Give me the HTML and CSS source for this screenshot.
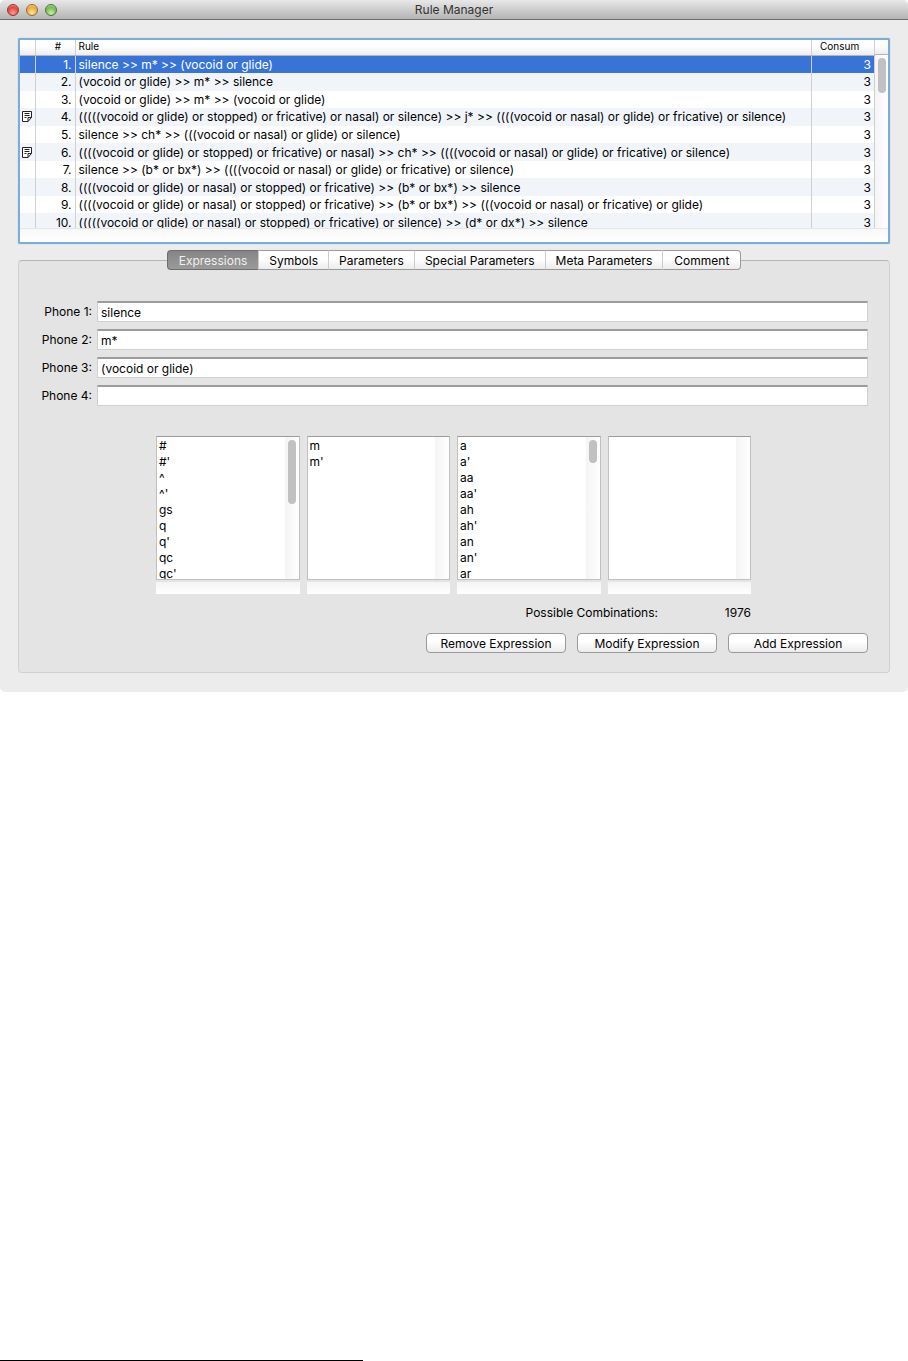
FILE: index.html
```html
<!DOCTYPE html>
<html lang="en">
<head>
    <meta charset="UTF-8">
    <meta name="viewport" content="width=device-width, initial-scale=1.0">
    <title>Rule Manager</title>
    <link rel="stylesheet" href="styles.css">
</head>
<body>
    <main class="window">
        <header class="titlebar">
            <div class="lights">
                <button class="light light-red" aria-label="Close"></button>
                <button class="light light-yellow" aria-label="Minimize"></button>
                <button class="light light-green" aria-label="Zoom"></button>
            </div>
            <h1>Rule Manager</h1>
        </header>

        <div class="content">
            <!-- Rule list -->
            <section class="rules">
                <div class="rules-view">
                    <table class="rules-table">
                        <colgroup>
                            <col class="col-icon">
                            <col class="col-number">
                            <col>
                            <col class="col-consumed">
                        </colgroup>
                        <thead>
                            <tr><th></th><th class="number">#</th><th>Rule</th><th class="consumed">Consum</th></tr>
                        </thead>
                        <tbody>
                            <tr class="selected"><td></td><td>1.</td><td>silence &gt;&gt; m* &gt;&gt; (vocoid or glide)</td><td>3</td></tr>
                            <tr><td></td><td>2.</td><td>(vocoid or glide) &gt;&gt; m* &gt;&gt; silence</td><td>3</td></tr>
                            <tr><td></td><td>3.</td><td>(vocoid or glide) &gt;&gt; m* &gt;&gt; (vocoid or glide)</td><td>3</td></tr>
                            <tr>
                                <td><svg class="note" viewBox="0 0 10 11"><path d="M.5 .5h9v6l-3.5 4h-5.5zM9.5 6.500h-3.5v4M2.5 2.500h5M2.5 4.500h5M2.5 6.500h2"/></svg></td>
                                <td>4.</td><td>(((((vocoid or glide) or stopped) or fricative) or nasal) or silence) &gt;&gt; j* &gt;&gt; ((((vocoid or nasal) or glide) or fricative) or silence)</td><td>3</td>
                            </tr>
                            <tr><td></td><td>5.</td><td>silence &gt;&gt; ch* &gt;&gt; (((vocoid or nasal) or glide) or silence)</td><td>3</td></tr>
                            <tr>
                                <td><svg class="note" viewBox="0 0 10 11"><path d="M.5 .5h9v6l-3.5 4h-5.5zM9.5 6.500h-3.5v4M2.5 2.500h5M2.5 4.500h5M2.5 6.500h2"/></svg></td>
                                <td>6.</td><td>((((vocoid or glide) or stopped) or fricative) or nasal) &gt;&gt; ch* &gt;&gt; ((((vocoid or nasal) or glide) or fricative) or silence)</td><td>3</td>
                            </tr>
                            <tr><td></td><td>7.</td><td>silence &gt;&gt; (b* or bx*) &gt;&gt; ((((vocoid or nasal) or glide) or fricative) or silence)</td><td>3</td></tr>
                            <tr><td></td><td>8.</td><td>((((vocoid or glide) or nasal) or stopped) or fricative) &gt;&gt; (b* or bx*) &gt;&gt; silence</td><td>3</td></tr>
                            <tr><td></td><td>9.</td><td>((((vocoid or glide) or nasal) or stopped) or fricative) &gt;&gt; (b* or bx*) &gt;&gt; (((vocoid or nasal) or fricative) or glide)</td><td>3</td></tr>
                            <tr><td></td><td>10.</td><td>(((((vocoid or glide) or nasal) or stopped) or fricative) or silence) &gt;&gt; (d* or dx*) &gt;&gt; silence</td><td>3</td></tr>
                        </tbody>
                    </table>
                    <div class="rules-side">
                        <div class="corner"></div>
                        <div class="scroller"><div class="thumb thumb-rules"></div></div>
                    </div>
                </div>
                <div class="rules-bottom"></div>
            </section>

            <!-- Tabs -->
            <nav class="tabs" role="tablist">
                <button class="tab active" role="tab" aria-selected="true">Expressions</button>
                <button class="tab" role="tab">Symbols</button>
                <button class="tab" role="tab">Parameters</button>
                <button class="tab" role="tab">Special Parameters</button>
                <button class="tab" role="tab">Meta Parameters</button>
                <button class="tab" role="tab">Comment</button>
            </nav>

            <section class="panel">
                <form class="phones">
                    <label for="phone1">Phone 1:</label>
                    <input type="text" id="phone1" value="silence">
                    <label for="phone2">Phone 2:</label>
                    <input type="text" id="phone2" value="m*">
                    <label for="phone3">Phone 3:</label>
                    <input type="text" id="phone3" value="(vocoid or glide)">
                    <label for="phone4">Phone 4:</label>
                    <input type="text" id="phone4" value="">
                </form>

                <div class="matches">
                    <div class="lists">
                        <div class="list">
                            <div class="list-view">
                                <ul><li>#</li><li>#'</li><li>^</li><li>^'</li><li>gs</li><li>q</li><li>q'</li><li>qc</li><li>qc'</li></ul>
                                <div class="scroller"><div class="thumb thumb-long"></div></div>
                            </div>
                            <div class="list-bottom"></div>
                        </div>
                        <div class="list">
                            <div class="list-view">
                                <ul><li>m</li><li>m'</li></ul>
                                <div class="scroller"></div>
                            </div>
                            <div class="list-bottom"></div>
                        </div>
                        <div class="list">
                            <div class="list-view">
                                <ul><li>a</li><li>a'</li><li>aa</li><li>aa'</li><li>ah</li><li>ah'</li><li>an</li><li>an'</li><li>ar</li></ul>
                                <div class="scroller"><div class="thumb thumb-short"></div></div>
                            </div>
                            <div class="list-bottom"></div>
                        </div>
                        <div class="list">
                            <div class="list-view">
                                <ul></ul>
                                <div class="scroller"></div>
                            </div>
                            <div class="list-bottom"></div>
                        </div>
                    </div>
                    <div class="combinations">
                        <span>Possible Combinations:</span>
                        <output class="count">1976</output>
                    </div>
                </div>

                <div class="actions">
                    <button type="button">Remove Expression</button>
                    <button type="button">Modify Expression</button>
                    <button type="button">Add Expression</button>
                </div>
            </section>
        </div>
    </main>
    <hr class="rule">
</body>
</html>
```
FILE: styles.css
```css
* {
    box-sizing: border-box;
}

body {
    font-family: Inter, "Noto Sans", sans-serif;
    font-size: 12px;
    line-height: 16px;
    color: #000;
    background-color: #fff;
    margin: 0;
    min-height: 100vh;
    display: flex;
    flex-direction: column;
}

button, input {
    font: inherit;
    color: inherit;
    margin: 0;
}

/* Window */
.window {
    background-color: #ececec;
    border-radius: 5px;
    overflow: hidden;
}

.titlebar {
    display: grid;
    grid-template-columns: 1fr auto 1fr;
    align-items: center;
    height: 20px;
    padding: 0 7px;
    background: linear-gradient(#e8e8e8, #b4b4b4);
    border-bottom: 1px solid #707070;
}

.titlebar h1 {
    font-size: 12px;
    font-weight: normal;
    color: #333;
    margin: 0;
}

.lights {
    display: flex;
    gap: 7px;
}

.light {
    width: 12px;
    height: 12px;
    padding: 0;
    border: 1px solid;
    border-radius: 50%;
}

.light-red {
    background: radial-gradient(circle at 50% 80%, #ff9a94, #e0453f 60%, #f3b0ac);
    border-color: #8f3531;
}

.light-yellow {
    background: radial-gradient(circle at 50% 80%, #ffe79a, #eda93c 60%, #f8dcae);
    border-color: #97682a;
}

.light-green {
    background: radial-gradient(circle at 50% 80%, #c9f0a0, #76b954 60%, #c8e2b8);
    border-color: #4b7437;
}

.content {
    padding: 18px 18px 19px;
}

/* Rules table */
.rules {
    background-color: #fff;
    border: 2px solid #7dacd9;
    border-radius: 2px;
    box-shadow: 0 0 1px #7dacd9;
}

.rules-view {
    display: flex;
    height: 189px;
    overflow: hidden;
    border-bottom: 1px solid #e6e6e6;
}

.rules-table {
    flex: 1;
    table-layout: fixed;
    border-collapse: collapse;
    width: 100%;
    height: 191px;
}

.col-icon {
    width: 15px;
}

.col-number {
    width: 40px;
}

.col-consumed {
    width: 63px;
}

.rules-table th,
.rules-table td {
    padding: 0 3px;
    white-space: nowrap;
    text-align: left;
    border-right: 1px solid #d0d0d0;
}

.rules-table td {
    padding-top: 1px;
}

.rules-table th {
    height: 15px;
    padding-bottom: 2px;
    font-size: 10px;
    line-height: 12px;
    font-weight: normal;
    background: linear-gradient(#fff 40%, #ececec);
    border-bottom: 1px solid #b5b5b5;
}

.rules-table th.number {
    padding-left: 9px;
    text-align: center;
}

.rules-table th.consumed {
    padding-left: 8px;
}

.rules-table td:first-child {
    padding: 0 2px;
}

.rules-table td:nth-child(2),
.rules-table td:last-child {
    text-align: right;
}

.rules-table tbody tr:nth-child(even) {
    background-color: #f1f5fa;
}

.rules-table tbody tr.selected {
    background-color: #3874d8;
    color: #fff;
}

.note {
    display: block;
    width: 10px;
    height: 11px;
    fill: #fff;
    stroke: #222;
}

.rules-side {
    width: 13px;
    display: flex;
    flex-direction: column;
}

.corner {
    height: 15px;
    background: linear-gradient(#fff 40%, #ececec);
    border-bottom: 1px solid #b5b5b5;
}

.rules-bottom {
    height: 13px;
    background: linear-gradient(#f8f8f8, #fff);
}

/* Scrollers */
.scroller {
    flex: 1;
    padding: 3px;
    background: linear-gradient(to right, #f4f4f4, #fff);
}

.thumb {
    width: 8px;
    border-radius: 4px;
    background-color: #c1c1c1;
}

.thumb-rules {
    height: 35px;
}

.thumb-long {
    height: 64px;
}

.thumb-short {
    height: 23px;
}

/* Tabs */
.tabs {
    display: flex;
    justify-content: center;
    position: relative;
    margin-top: 6px;
}

.tab {
    height: 20px;
    padding: 1px 10px 0;
    background: linear-gradient(#fff 40%, #ececec);
    border: 1px solid #9a9a9a;
    border-left-color: #ccc;
    border-right-width: 0;
}

.tab:first-child {
    padding: 1px 11px 0;
    border-radius: 4px 0 0 4px;
}

.tab:last-child {
    padding: 1px 11px 0;
    border-right-width: 1px;
    border-radius: 0 4px 4px 0;
}

.tab.active {
    background: linear-gradient(#858585, #9a9a9a);
    border-color: #6e6e6e;
    color: #f0f0f0;
}

/* Panel */
.panel {
    margin-top: -10px;
    padding: 40px 21px 19px 20px;
    background-color: #e4e4e4;
    border: 1px solid #d0d0d0;
    border-top-color: #b4b4b4;
    border-radius: 4px;
}

.phones {
    display: grid;
    grid-template-columns: 53px 1fr;
    gap: 7px 5px;
    align-items: center;
}

.phones label {
    text-align: right;
    white-space: nowrap;
}

.phones input {
    height: 21px;
    width: 100%;
    padding: 0 3px;
    background-color: #fff;
    border: 1px solid #d0d0d0;
    border-top: 2px solid #9c9c9c;
    border-radius: 0;
}

/* Matching phone lists */
.matches {
    width: 595px;
    margin: 30px auto 0;
}

.lists {
    display: flex;
    gap: 7px;
}

.list {
    flex: 1;
}

.list-view {
    display: flex;
    height: 144px;
    background-color: #fff;
    border: 1px solid #c0c0c0;
    border-top-color: #9c9c9c;
}

.list ul {
    flex: 1;
    list-style: none;
    margin: 0;
    padding: 1px 2px 0;
    overflow: hidden;
}

.list .scroller {
    flex: none;
    width: 14px;
}

.list-bottom {
    height: 12px;
    margin-top: 2px;
    background: linear-gradient(#f4f4f4, #fff);
}

.combinations {
    display: flex;
    justify-content: flex-end;
    margin-top: 11px;
}

.count {
    width: 93px;
    text-align: right;
}

/* Buttons */
.actions {
    display: flex;
    justify-content: flex-end;
    gap: 11px;
    margin-top: 12px;
}

.actions button {
    width: 140px;
    height: 20px;
    padding: 1px 0 0;
    line-height: 18px;
    background: linear-gradient(#fff 40%, #ececec);
    border: 1px solid #9a9a9a;
    border-radius: 4px;
}

/* Rule at the foot of the page */
.rule {
    width: 40%;
    margin: auto 0 0;
    border: 0;
    border-top: 1px solid #000;
}
```
